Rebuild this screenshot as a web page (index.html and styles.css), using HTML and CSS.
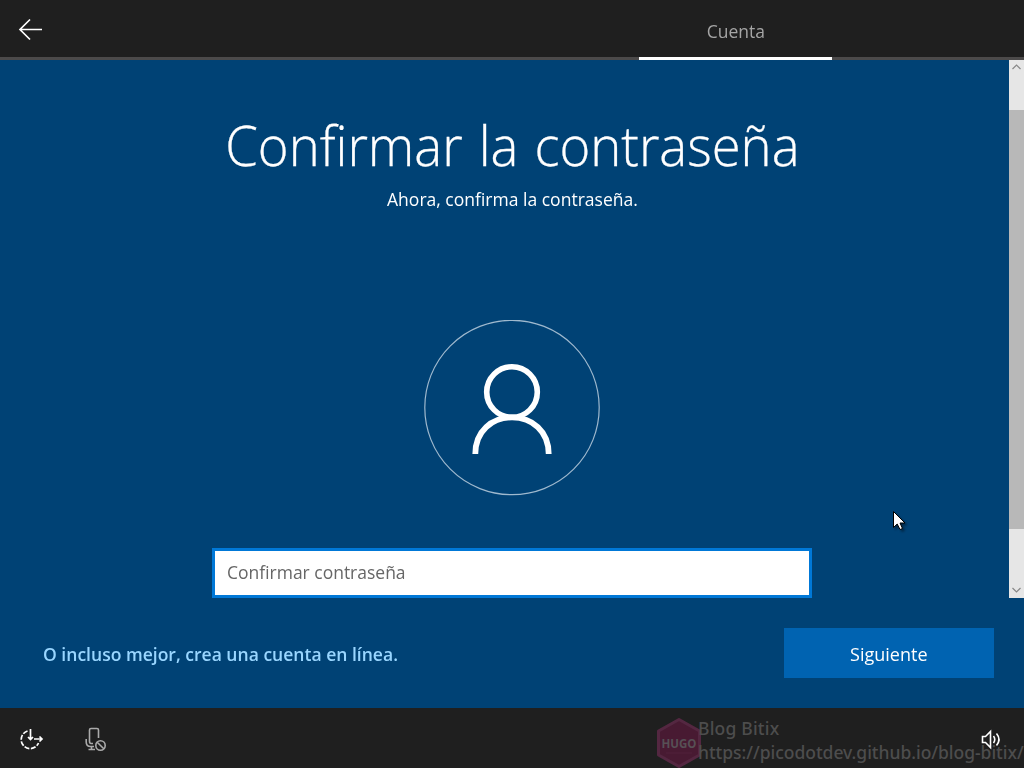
FILE: index.html
```html
<!DOCTYPE html>
<html lang="es">
<head>
<meta charset="utf-8">
<title>Confirmar la contraseña</title>
<link rel="stylesheet" href="styles.css">
</head>
<body>
<div class="screen">
  <header class="topbar">
    <svg class="back" width="26" height="24" viewBox="0 0 26 24"><path d="M24 12.500H2M12 2.500L2 12.500L12 22.500" fill="none" stroke="#fff" stroke-width="1.700"/></svg>
    <div class="tab"><span>Cuenta</span></div>
  </header>
  <main class="content">
    <section class="page">
      <h1 class="title"><span>Confirmar la contraseña</span></h1>
      <p class="subtitle"><span>Ahora, confirma la contraseña.</span></p>
      <svg class="avatar" width="176" height="176" viewBox="0 0 176 176" fill="none" stroke="#fff">
        <circle cx="88" cy="87.5" r="87.2" stroke="#9fb9ce" stroke-width="1.2"/>
        <ellipse cx="88" cy="72" rx="25.3" ry="25.3" stroke-width="5.6"/>
        <path d="M51.3 134C51.3 111 68 97.3 88 97.3S124.700 111 124.700 134" stroke-width="5.800"/>
      </svg>
      <div class="field"><span>Confirmar contraseña</span></div>
    </section>
    <div class="scrollbar">
      <svg width="15" height="15" viewBox="0 0 15 15"><path d="M3.500 9L7.500 5L11.500 9" fill="none" stroke="#888" stroke-width="1.200"/></svg>
      <div class="thumb"></div>
      <svg width="15" height="15" viewBox="0 0 15 15"><path d="M3.500 5L7.500 9L11.500 5" fill="none" stroke="#888" stroke-width="1.200"/></svg>
    </div>
  </main>
  <div class="actions">
    <a class="link"><span>O incluso mejor, crea una cuenta en línea.</span></a>
    <div class="next"><span>Siguiente</span></div>
  </div>
  <footer class="taskbar">
    <svg class="ease" width="26" height="26" viewBox="0 0 26 26" fill="none" stroke="#fff" stroke-width="1.700">
      <path d="M9.500 5A9 9 0 1 0 20.500 17" stroke-dasharray="5 1.500"/>
      <path d="M12.500 3V13.500M10 11L12.500 13.500L15 11M16 13H24M21.500 10.500L24 13L21.500 15.500"/>
    </svg>
    <svg class="mic" width="24" height="26" viewBox="0 0 24 26" fill="none" stroke="#aaa" stroke-width="1.600">
      <path d="M5.500 15V4Q5.500 2.500 7 2.500H13Q14.500 2.500 14.500 4V12M9 17.500H7Q5.500 17.500 5.500 15"/>
      <path d="M2.200 13V16Q2.200 20.500 6.500 20.500H10M7.500 20V23M4.500 23.500H11"/>
      <circle cx="16.500" cy="19.500" r="4.700"/><path d="M13.200 16.200L19.800 22.800"/>
    </svg>
    <svg class="volume" width="24" height="24" viewBox="0 0 24 24" fill="none" stroke="#fff" stroke-width="1.600">
      <path d="M2.500 8.500H5.500L10.500 3.500V19.500L5.500 14.500H2.500Z"/>
      <path d="M13.500 8Q16 11.500 13.500 15M16.500 5.500Q21.500 11.500 16.500 17.500"/>
    </svg>
  </footer>
  <div class="watermark">
    <svg width="44" height="50" viewBox="0 0 44 50">
      <path d="M22 1.500L42.500 13V37L22 48.500L1.500 37V13Z" fill="#481a32" stroke="#542741" stroke-width="3" stroke-linejoin="round"/>
      <text class="hugo" x="4.500" y="30" textLength="35" lengthAdjust="spacingAndGlyphs">HUGO</text>
      <path d="M9 35H35" stroke="#53243d" stroke-width=".8"/>
    </svg>
    <div class="credits"><div><span class="blog">Blog Bitix</span></div><div><span class="url">https://picodotdev.github.io/blog-bitix/</span></div></div>
  </div>
  <svg class="cursor" width="20" height="26" viewBox="0 0 20 26"><path d="M1.500 1.500V17.500L5.200 14L8 19.500L10.500 18.500L8 13H13Z" fill="#fff" stroke="#000"/></svg>
</div>
</body>
</html>
```
FILE: styles.css
```css
* { box-sizing: border-box; }
body { margin: 0; font-family: "Open Sans", sans-serif; }
.screen { position: relative; width: 1024px; height: 768px; overflow: hidden; display: flex; flex-direction: column; background: #004275; color: #fff; }
span { display: inline-block; white-space: nowrap; }
.topbar { height: 60px; background: #1f1f1f; border-bottom: 3px solid #4c4a4a; display: flex; justify-content: space-between; padding: 0 192px 0 18px; }
.back { margin-top: 17px; }
.tab { width: 193px; height: 60px; border-bottom: 3px solid #fff; text-align: center; font-size: 18.500px; line-height: 62px; color: #a5a5a5; }
.tab span { transform: scaleX(.945); }
.content { height: 538px; display: flex; }
.page { width: 1009px; padding-left: 15px; display: flex; flex-direction: column; align-items: center; }
.title { margin: 49px 0 0; font-size: 55px; font-weight: 300; line-height: 72px; }
.title span { transform: scaleX(.956); word-spacing: 2.500px; -webkit-text-stroke: .3px #fff; }
.subtitle { margin: 6px 0 0; font-size: 18.500px; line-height: 24px; }
.subtitle span { transform: scaleX(.947); }
.avatar { margin-top: 109px; }
.field { width: 600px; height: 50px; margin-top: 52px; border: 3px solid #0078d7; background: #fff; color: #666; font-size: 18.500px; line-height: 42px; padding-left: 12px; }
.field span { transform: scaleX(.945); transform-origin: left; }
.scrollbar { width: 15px; background: #e6e6e6; display: flex; flex-direction: column; }
.thumb { height: 419px; margin: 35px 0 54px; background: #b8b8b8; }
.actions { height: 110px; display: flex; justify-content: space-between; padding: 30px 30px 0 42.500px; }
.link { font-size: 18.500px; font-weight: 600; line-height: 52px; color: #99d6ff; }
.link span { transform: scaleX(.948); transform-origin: left; }
.next { width: 210px; height: 50px; background: #0063b1; text-align: center; font-size: 18.500px; line-height: 52px; }
.next span { transform: scaleX(.973); }
.taskbar { height: 60px; display: flex; background: #1f1f1f; padding: 18px 20px 0 18px; }
.mic { margin-left: 40px; }
.volume { position: relative; z-index: 2; margin: 2px 0 0 auto; }
.watermark { position: absolute; left: 657px; top: 718px; display: flex; color: #4d4d4d; font-family: "Noto Sans", sans-serif; font-size: 17.500px; font-weight: 500; line-height: 24px; }
.credits { margin: -2px 0 0 -3px; }
.blog { letter-spacing: .2px; }
.url { letter-spacing: -.03px; }
.hugo { font: bold 12.500px "Open Sans", sans-serif; fill: #575055; }
.cursor { position: absolute; left: 892px; top: 510px; filter: drop-shadow(2px 2px 1px #0006); }
```
